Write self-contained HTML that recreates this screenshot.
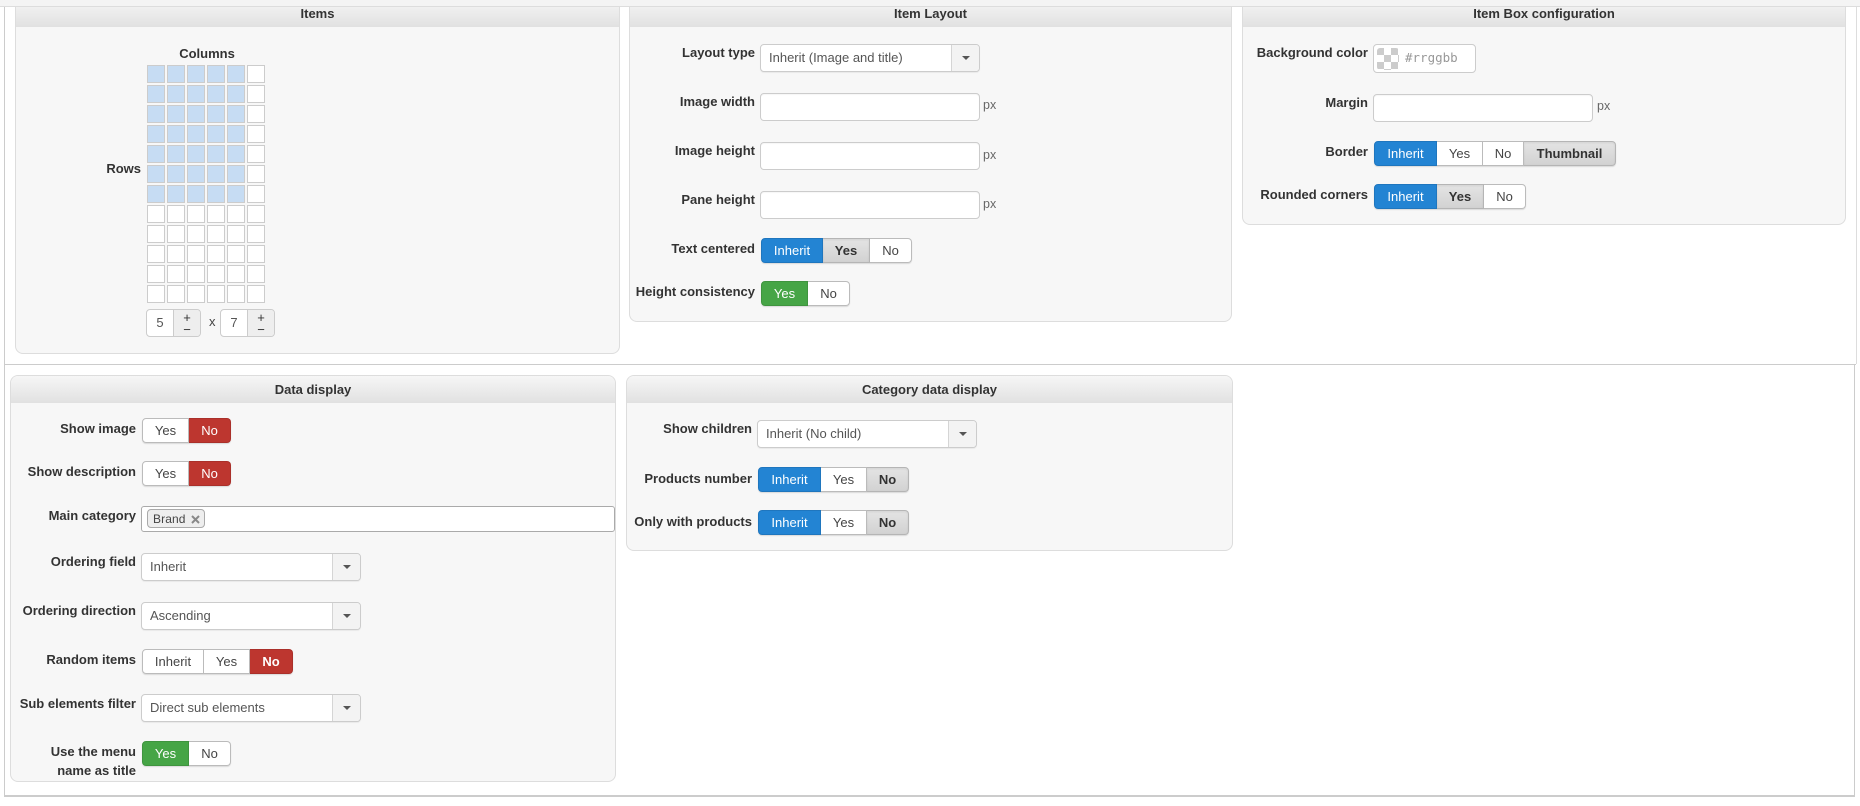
<!DOCTYPE html>
<html><head><meta charset="utf-8"><title>Settings</title>
<style>
html,body{margin:0;padding:0;background:#fff;}
body{width:1860px;height:806px;overflow:hidden;position:relative;font-family:"Liberation Sans",Arial,sans-serif;font-size:13px;color:#333;}
#p{position:absolute;left:0;top:0;width:1860px;height:806px;overflow:hidden;}
.line{position:absolute;background:#ccc;}
.panel{position:absolute;box-sizing:border-box;background:#f7f7f7;border:1px solid #ddd;border-radius:8px;overflow:hidden;}
.head{position:absolute;left:0;right:0;top:0;background:linear-gradient(#f6f6f6,#e1e1e1);text-align:center;font-weight:bold;color:#333;}
.lb{position:absolute;font-weight:bold;line-height:18px;white-space:nowrap;text-align:right;color:#333;}
.t{position:absolute;line-height:18px;white-space:nowrap;color:#333;}
.inp{position:absolute;box-sizing:border-box;background:#fff;border:1px solid #ccc;border-radius:4px;height:28px;width:220px;box-shadow:inset 0 1px 1px rgba(0,0,0,.04);}
.sel{position:absolute;box-sizing:border-box;background:#fff;border:1px solid #ccc;border-radius:4px;height:28px;width:220px;line-height:26px;color:#555;padding-left:8px;box-shadow:0 1px 1px rgba(0,0,0,.06);}
.sel b{position:absolute;right:0;top:0;bottom:0;width:27px;background:#f3f3f3;border-left:1px solid #d5d5d5;border-radius:0 3px 3px 0;}
.sel b:after{content:"";position:absolute;left:10px;top:11px;border:4px solid transparent;border-top:4px solid #555;border-bottom:0;}
.px{position:absolute;line-height:18px;color:#666;font-size:12.5px;}
.bg{position:absolute;display:flex;box-sizing:border-box;height:25px;border-radius:4px;box-shadow:0 1px 1px rgba(0,0,0,.12);background:#fff;}
.bg span{box-sizing:border-box;display:block;height:25px;line-height:23px;text-align:center;color:#444;background:#fff;border:1px solid #bbb;border-left-width:0;}
.bg span:first-child{border-left-width:1px;border-radius:4px 0 0 4px;}
.bg span:last-child{border-radius:0 4px 4px 0;}
.bg .blue{background:#2384d3;border-color:#1f76be;color:#fff;}
.bg .red{background:#bd362f;border-color:#aa302a;color:#fff;}
.bg .green{background:#46a546;border-color:#3f943f;color:#fff;}
.bg .gray{background:linear-gradient(#e4e4e4,#d2d2d2);border-color:#b5b5b5;color:#333;font-weight:bold;box-shadow:inset 0 1px 2px rgba(0,0,0,.08);}
.bg .redb{font-weight:bold;}
#grid{position:absolute;left:147px;top:65px;width:118px;display:flex;flex-wrap:wrap;gap:2px;}
#grid i{display:block;box-sizing:border-box;width:18px;height:18px;border:1px solid #ccc;background:#fff;}
#grid i:nth-child(-n+42):not(:nth-child(6n)){background:#c6dcf3;}
.spin{position:absolute;box-sizing:border-box;top:309px;height:28px;width:55px;border:1px solid #ccc;border-radius:4px;background:#fff;overflow:hidden;}
.spin em{position:absolute;left:0;top:0;width:26px;text-align:center;font-style:normal;line-height:26px;color:#555;font-size:13px;}
.spin u{position:absolute;right:0;top:0;bottom:0;width:26px;background:#eee;border-left:1px solid #ccc;text-decoration:none;color:#333;}
.spin u s{position:absolute;left:0;width:26px;text-align:center;text-decoration:none;font-size:13px;line-height:13px;}
</style></head><body><div id="p">
<div style="position:absolute;left:0;top:0;width:1860px;height:7px;background:#f4f4f4"></div>
<div class="line" style="left:0;top:6px;width:1860px;height:1px;background:#ddd"></div>
<div class="line" style="left:4px;top:7px;width:1px;height:789px"></div>
<div class="line" style="left:4px;top:364px;width:1852px;height:1px"></div>
<div class="line" style="left:1856px;top:7px;width:1px;height:357px;background:#ddd"></div>
<div class="line" style="left:1854px;top:365px;width:1px;height:431px"></div>
<div class="line" style="left:4px;top:795px;width:1851px;height:2px"></div>

<!-- Items -->
<div class="panel" style="left:15px;top:-2px;width:605px;height:356px"><div class="head" style="height:28px;line-height:30px">Items</div></div>
<div class="panel" style="left:629px;top:-2px;width:603px;height:324px"><div class="head" style="height:28px;line-height:30px">Item Layout</div></div>
<div class="panel" style="left:1242px;top:-2px;width:604px;height:227px"><div class="head" style="height:28px;line-height:30px">Item Box configuration</div></div>
<div class="line" style="left:0;top:6px;width:1860px;height:1px;background:#ddd"></div>
<div style="position:absolute;left:0;top:0;width:1860px;height:6px;background:#f4f4f4"></div>

<div class="lb" style="left:147px;width:120px;top:45px;text-align:center">Columns</div>
<div class="lb" style="right:1719px;top:160px">Rows</div>
<div id="grid"><i></i><i></i><i></i><i></i><i></i><i></i><i></i><i></i><i></i><i></i><i></i><i></i><i></i><i></i><i></i><i></i><i></i><i></i><i></i><i></i><i></i><i></i><i></i><i></i><i></i><i></i><i></i><i></i><i></i><i></i><i></i><i></i><i></i><i></i><i></i><i></i><i></i><i></i><i></i><i></i><i></i><i></i><i></i><i></i><i></i><i></i><i></i><i></i><i></i><i></i><i></i><i></i><i></i><i></i><i></i><i></i><i></i><i></i><i></i><i></i><i></i><i></i><i></i><i></i><i></i><i></i><i></i><i></i><i></i><i></i><i></i><i></i></div>
<div class="spin" style="left:146px"><em>5</em><u><s style="top:1px">+</s><s style="top:13px">−</s></u></div>
<div class="t" style="left:209px;top:313px;color:#444">x</div>
<div class="spin" style="left:220px"><em>7</em><u><s style="top:1px">+</s><s style="top:13px">−</s></u></div>

<!-- Item Layout -->
<div class="lb" style="right:1105px;top:44px">Layout type</div>
<div class="sel" style="left:760px;top:44px">Inherit (Image and title)<b></b></div>
<div class="lb" style="right:1105px;top:93px">Image width</div>
<div class="inp" style="left:760px;top:93px"></div><div class="px" style="left:983px;top:96px">px</div>
<div class="lb" style="right:1105px;top:142px">Image height</div>
<div class="inp" style="left:760px;top:142px"></div><div class="px" style="left:983px;top:146px">px</div>
<div class="lb" style="right:1105px;top:191px">Pane height</div>
<div class="inp" style="left:760px;top:191px"></div><div class="px" style="left:983px;top:195px">px</div>
<div class="lb" style="right:1105px;top:240px">Text centered</div>
<div class="bg" style="left:761px;top:238px"><span class="blue" style="width:62px">Inherit</span><span class="gray" style="width:47px">Yes</span><span style="width:42px">No</span></div>
<div class="lb" style="right:1105px;top:283px">Height consistency</div>
<div class="bg" style="left:761px;top:281px"><span class="green" style="width:47px">Yes</span><span style="width:42px">No</span></div>

<!-- Item Box -->
<div class="lb" style="right:492px;top:44px">Background color</div>
<div style="position:absolute;box-sizing:border-box;left:1373px;top:44px;width:103px;height:29px;background:#fff;border:1px solid #ccc;border-radius:4px"></div>
<div style="position:absolute;left:1377px;top:48px;width:22px;height:22px;border-radius:3px;background-color:#fff;background-image:conic-gradient(#ccc 25%,#fff 0 50%,#ccc 0 75%,#fff 0);background-size:14px 14px;background-position:7px 0"></div>
<div class="t" style="left:1405px;top:49px;font-family:'DejaVu Sans Mono','Liberation Mono',monospace;font-size:12.5px;color:#999">#rrggbb</div>
<div class="lb" style="right:492px;top:94px">Margin</div>
<div class="inp" style="left:1373px;top:94px"></div><div class="px" style="left:1597px;top:97px">px</div>
<div class="lb" style="right:492px;top:143px">Border</div>
<div class="bg" style="left:1374px;top:141px"><span class="blue" style="width:63px">Inherit</span><span style="width:46px">Yes</span><span style="width:41px">No</span><span class="gray" style="width:92px">Thumbnail</span></div>
<div class="lb" style="right:492px;top:186px">Rounded corners</div>
<div class="bg" style="left:1374px;top:184px"><span class="blue" style="width:63px">Inherit</span><span class="gray" style="width:47px">Yes</span><span style="width:42px">No</span></div>

<!-- Data display -->
<div class="panel" style="left:10px;top:375px;width:606px;height:407px"><div class="head" style="height:27px;line-height:27px">Data display</div></div>
<div class="lb" style="right:1724px;top:420px">Show image</div>
<div class="bg" style="left:142px;top:418px"><span style="width:47px">Yes</span><span class="red" style="width:42px">No</span></div>
<div class="lb" style="right:1724px;top:463px">Show description</div>
<div class="bg" style="left:142px;top:461px"><span style="width:47px">Yes</span><span class="red" style="width:42px">No</span></div>
<div class="lb" style="right:1724px;top:507px">Main category</div>
<div style="position:absolute;box-sizing:border-box;left:141px;top:506px;width:474px;height:26px;background:#fff;border:1px solid #aaa;border-radius:3px"></div>
<div style="position:absolute;box-sizing:border-box;left:147px;top:509px;width:58px;height:19px;background:#eee;border:1px solid #aaa;border-radius:4px"></div>
<div class="t" style="left:153px;top:510px;font-size:12px;color:#444;letter-spacing:.1px">Brand</div>
<svg style="position:absolute;left:191px;top:515px" width="9" height="9" viewBox="0 0 9 9"><path d="M1 1L8 8M8 1L1 8" stroke="#888" stroke-width="2" fill="none"/></svg>
<div class="lb" style="right:1724px;top:553px">Ordering field</div>
<div class="sel" style="left:141px;top:553px">Inherit<b></b></div>
<div class="lb" style="right:1724px;top:602px">Ordering direction</div>
<div class="sel" style="left:141px;top:602px">Ascending<b></b></div>
<div class="lb" style="right:1724px;top:651px">Random items</div>
<div class="bg" style="left:142px;top:649px"><span style="width:62px">Inherit</span><span style="width:46px">Yes</span><span class="red redb" style="width:43px">No</span></div>
<div class="lb" style="right:1724px;top:695px">Sub elements filter</div>
<div class="sel" style="left:141px;top:694px">Direct sub elements<b></b></div>
<div class="lb" style="right:1724px;top:743px">Use the menu</div>
<div class="lb" style="right:1724px;top:762px">name as title</div>
<div class="bg" style="left:142px;top:741px"><span class="green" style="width:47px">Yes</span><span style="width:42px">No</span></div>

<!-- Category data display -->
<div class="panel" style="left:626px;top:375px;width:607px;height:176px"><div class="head" style="height:27px;line-height:27px">Category data display</div></div>
<div class="lb" style="right:1108px;top:420px">Show children</div>
<div class="sel" style="left:757px;top:420px">Inherit (No child)<b></b></div>
<div class="lb" style="right:1108px;top:470px">Products number</div>
<div class="bg" style="left:758px;top:467px"><span class="blue" style="width:63px">Inherit</span><span style="width:46px">Yes</span><span class="gray" style="width:42px">No</span></div>
<div class="lb" style="right:1108px;top:513px">Only with products</div>
<div class="bg" style="left:758px;top:510px"><span class="blue" style="width:63px">Inherit</span><span style="width:46px">Yes</span><span class="gray" style="width:42px">No</span></div>
</div></body></html>
